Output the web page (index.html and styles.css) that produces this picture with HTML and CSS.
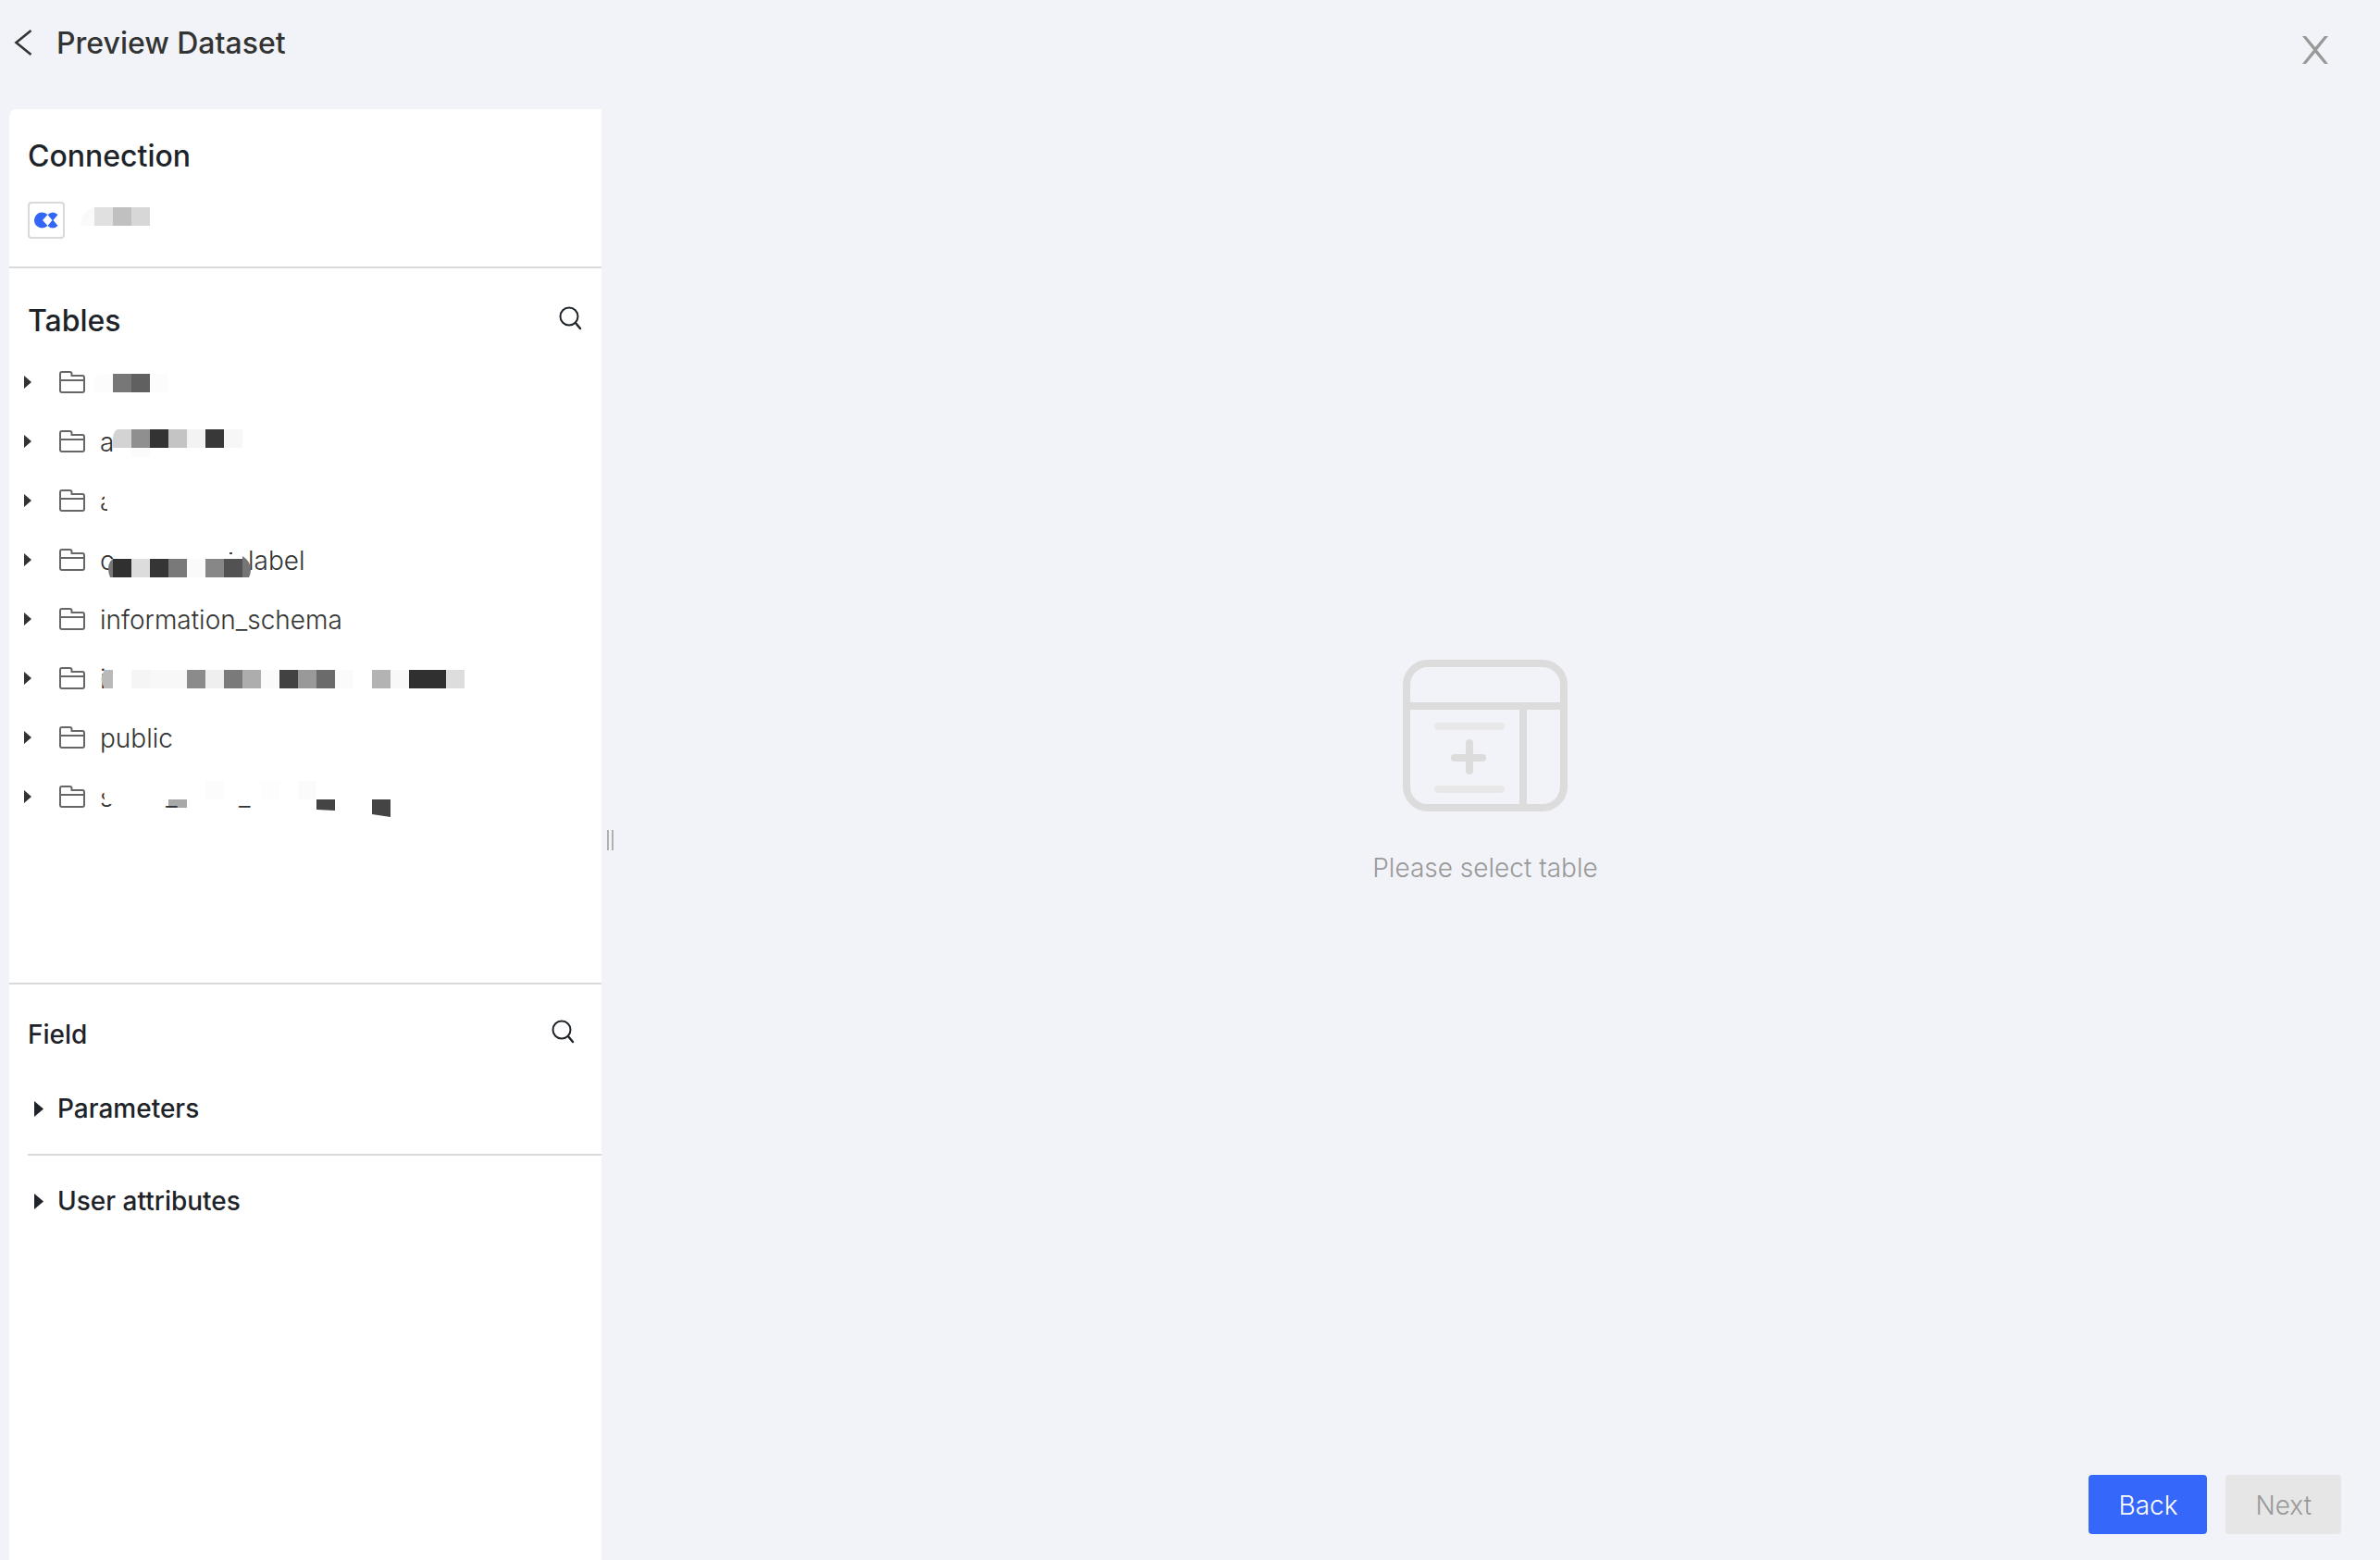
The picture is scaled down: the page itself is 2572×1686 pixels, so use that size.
FILE: index.html
```
<!DOCTYPE html>
<html lang="en">

<head>
    <meta charset="UTF-8">
    <meta name="viewport" content="width=device-width, initial-scale=1.0">
    <title>Preview Dataset</title>
    <link rel="stylesheet" href="styles.css">
</head>

<body>
    <!-- shared icons -->
    <svg class="sprite" width="0" height="0" aria-hidden="true">
        <symbol id="search" viewBox="0 0 26 26">
            <circle cx="12" cy="11" r="9.5" fill="none" stroke="currentColor" stroke-width="2" />
            <path d="M19 18l5 6" fill="none" stroke="currentColor" stroke-width="2.4" stroke-linecap="round" />
        </symbol>
        <symbol id="folder" viewBox="0 0 28 24">
            <path d="M1 21V3a2 2 0 0 1 2-2h8.500a2 2 0 0 1 2 2v2H25a2 2 0 0 1 2 2v14a2 2 0 0 1-2 2H3a2 2 0 0 1-2-2zM1 10h26" fill="none" stroke="#666" stroke-width="2" />
        </symbol>
        <symbol id="caret" viewBox="0 0 8 14">
            <path d="M0 0v14l8-7z" fill="currentColor" />
        </symbol>
    </svg>

    <header class="topbar">
        <button class="icon-button" aria-label="Go back">
            <svg width="20" height="28" viewBox="0 0 20 28"><path d="M18.500 1 2.500 14l16 13" fill="none" stroke="#333" stroke-width="2.600" /></svg>
        </button>
        <h1>Preview Dataset</h1>
        <button class="icon-button close" aria-label="Close">
            <svg width="28" height="30" viewBox="0 0 28 30"><path d="M0 0h4l10 12L24 0h4L16 15l12 15h-4L14 18 4 30H0l12-15z" fill="#999" /></svg>
        </button>
    </header>

    <main class="layout">
        <aside class="sidebar">
            <section class="connection">
                <h2>Connection</h2>
                <div class="connection-row">
                    <span class="connection-logo">
                        <svg width="26" height="18" viewBox="0 0 26 18" fill="#3366f6">
                            <path d="M14.500 3A8.500 8.500 0 1 0 14.500 15L9 9z" />
                            <path d="M14.500 3q5.500-5 11 0L20.500 9l5 6q-5.500 5-11 0L19.500 9z" />
                        </svg>
                    </span>
                    <svg width="76" height="20" viewBox="0 0 76 20" aria-hidden="true">
                        <path d="M1 20V15Q4 3 16 0v20z" fill="#fafafa" />
                        <path d="M16 0h20v20H16z" fill="#e0e0e0" />
                        <path d="M36 0h20v20H36z" fill="#c0c0c0" />
                        <path d="M56 0h20v20H56z" fill="#d7d7d7" />
                    </svg>
                </div>
            </section>

            <section class="tables">
                <div class="section-head">
                    <h2>Tables</h2>
                    <button class="icon-button" aria-label="Search tables">
                        <svg width="26" height="26"><use href="#search" /></svg>
                    </button>
                </div>
                <ul class="tree">
                    <li>
                        <button class="caret" aria-label="Expand"><svg width="8" height="14"><use href="#caret" /></svg></button>
                        <svg width="28" height="24"><use href="#folder" /></svg>
                        <span class="name">
                            <svg class="mask" width="420" height="64" aria-hidden="true">
                                <path d="M-6 43V27l4-4h16v20z" fill="#fcfcfc" />
                                <path d="M14 23h20v20H14z" fill="#777" />
                                <path d="M34 23h20v20H34z" fill="#606060" />
                                <path d="M54 23h20v20H54z" fill="#fcfcfc" />
                            </svg>
                        </span>
                    </li>
                    <li>
                        <button class="caret" aria-label="Expand"><svg width="8" height="14"><use href="#caret" /></svg></button>
                        <svg width="28" height="24"><use href="#folder" /></svg>
                        <span class="name">a
                            <svg class="mask" width="420" height="64" aria-hidden="true">
                                <path d="M14 39V28q1-7 5-9h15v20z" fill="#d3d3d3" />
                                <path d="M34 19h20v20H34z" fill="#8f8f8f" />
                                <path d="M54 19h20v20H54z" fill="#333" />
                                <path d="M74 19h20v20H74z" fill="#c4c4c4" />
                                <path d="M94 19h20v20H94z" fill="#f3f3f3" />
                                <path d="M114 19h20v20h-20z" fill="#383838" />
                                <path d="M134 19h20v20h-20z" fill="#f7f7f7" />
                                <path d="M34 39h20v10H34z" fill="#fbfbfb" />
                            </svg>
                        </span>
                    </li>
                    <li>
                        <button class="caret" aria-label="Expand"><svg width="8" height="14"><use href="#caret" /></svg></button>
                        <svg width="28" height="24"><use href="#folder" /></svg>
                        <span class="name">a
                            <svg class="mask" width="420" height="64" aria-hidden="true">
                                <path d="M5 24h15v24H8v-8l-3-4z" fill="#fff" />
                            </svg>
                        </span>
                    </li>
                    <li>
                        <button class="caret" aria-label="Expand"><svg width="8" height="14"><use href="#caret" /></svg></button>
                        <svg width="28" height="24"><use href="#folder" /></svg>
                        <span class="name"><span class="covered">c</span>label
                            <svg class="mask" width="420" height="64" aria-hidden="true">
                                <path d="M14 51h-3q-4-10 0-17l3-3z" fill="#777" />
                                <path d="M14 31h20v20H14z" fill="#303030" />
                                <path d="M34 31h20v20H34z" fill="#dcdcdc" />
                                <path d="M54 31h20v20H54z" fill="#353535" />
                                <path d="M74 31h20v20H74z" fill="#797979" />
                                <path d="M94 31h20v20H94z" fill="#fafafa" />
                                <path d="M114 31h20v20h-20z" fill="#878787" />
                                <path d="M134 31h20v20h-20z" fill="#525252" />
                                <path d="M154 28q8 5 9 13 0 7-2 10h-7z" fill="#757575" />
                                <path d="M140 24h3v2h-3z" fill="#444" />
                            </svg>
                        </span>
                    </li>
                    <li>
                        <button class="caret" aria-label="Expand"><svg width="8" height="14"><use href="#caret" /></svg></button>
                        <svg width="28" height="24"><use href="#folder" /></svg>
                        <span class="name">information_schema</span>
                    </li>
                    <li>
                        <button class="caret" aria-label="Expand"><svg width="8" height="14"><use href="#caret" /></svg></button>
                        <svg width="28" height="24"><use href="#folder" /></svg>
                        <span class="name">i
                            <svg class="mask" width="420" height="64" aria-hidden="true">
                                <path d="M14 23v20H5q-7-10 0-20z" fill="#b9b9b9" />
                                <path d="M34 23h20v20H34z" fill="#f5f5f5" />
                                <path d="M54 23h40v20H54z" fill="#f8f8f8" />
                                <path d="M94 23h20v20H94z" fill="#8b8b8b" />
                                <path d="M114 23h20v20h-20z" fill="#efefef" />
                                <path d="M134 23h20v20h-20z" fill="#7a7a7a" />
                                <path d="M154 23h20v20h-20z" fill="#adadad" />
                                <path d="M174 23h20v20h-20z" fill="#fafafa" />
                                <path d="M194 23h20v20h-20z" fill="#424242" />
                                <path d="M214 23h20v20h-20z" fill="#999" />
                                <path d="M234 23h20v20h-20z" fill="#6b6b6b" />
                                <path d="M254 23h20v20h-20z" fill="#fbfbfb" />
                                <path d="M294 23h20v20h-20z" fill="#b3b3b3" />
                                <path d="M314 23h20v20h-20z" fill="#f8f8f8" />
                                <path d="M334 23h40v20h-40z" fill="#303030" />
                                <path d="M374 23h20v20h-20z" fill="#ddd" />
                            </svg>
                        </span>
                    </li>
                    <li>
                        <button class="caret" aria-label="Expand"><svg width="8" height="14"><use href="#caret" /></svg></button>
                        <svg width="28" height="24"><use href="#folder" /></svg>
                        <span class="name">public</span>
                    </li>
                    <li>
                        <button class="caret" aria-label="Expand"><svg width="8" height="14"><use href="#caret" /></svg></button>
                        <svg width="28" height="24"><use href="#folder" /></svg>
                        <span class="name">s
                            <svg class="mask" width="420" height="64" aria-hidden="true">
                                <path d="M4 22h16v18h-9l-6-5z" fill="#fff" />
                                <path d="M114 15h20v20h-20z" fill="#fcfcfc" />
                                <path d="M174 15h20v20h-20z" fill="#fdfdfd" />
                                <path d="M214 15h20v20h-20z" fill="#fbfbfb" />
                                <path d="M74 35h20v9H74z" fill="#a8a8a8" />
                                <path d="M234 35h20v12l-20-1z" fill="#444" />
                                <path d="M294 35h20v19l-20-3z" fill="#444" />
                                <text x="71" y="42">_</text>
                                <text x="150" y="42">_</text>
                            </svg>
                        </span>
                    </li>
                </ul>
            </section>

            <section class="fields">
                <div class="section-head">
                    <h3>Field</h3>
                    <button class="icon-button" aria-label="Search fields">
                        <svg width="26" height="26"><use href="#search" /></svg>
                    </button>
                </div>
                <button class="group">
                    <svg width="10" height="17" viewBox="0 0 10 17"><path d="M0 0v17l10-8.500z" fill="currentColor" /></svg>
                    Parameters
                </button>
                <button class="group">
                    <svg width="10" height="17" viewBox="0 0 10 17"><path d="M0 0v17l10-8.500z" fill="currentColor" /></svg>
                    User attributes
                </button>
            </section>
        </aside>

        <div class="resizer"><span></span><span></span></div>

        <section class="content">
            <div class="empty">
                <svg width="178" height="164" viewBox="0 0 178 164" fill="none" stroke="#dcdcdc" stroke-width="8">
                    <rect x="4" y="4" width="170" height="156" rx="23" />
                    <path d="M4 50h170M130 50v110" />
                    <path d="M56 106h30M72 90v30" stroke-linecap="round" />
                    <path d="M38 72h68M38 140h68" stroke="#e8e8e8" stroke-linecap="round" />
                </svg>
                <p>Please select table</p>
            </div>
            <footer class="actions">
                <button class="button primary">Back</button>
                <button class="button" disabled>Next</button>
            </footer>
        </section>
    </main>
</body>

</html>
```
FILE: styles.css
```
* {
    box-sizing: border-box;
}

body {
    display: flex;
    flex-direction: column;
    min-height: 100vh;
    margin: 0;
    font-family: Inter, sans-serif;
    font-size: 28px;
    font-weight: 350;
    line-height: 42px;
    color: #333;
    background-color: #f1f3f8;
}

h1,
h2,
h3,
p,
ul {
    margin: 0;
    padding: 0;
}

h1,
h2 {
    font-size: 32px;
    font-weight: 500;
}

h3 {
    font-size: 28px;
    font-weight: 500;
}

h2,
h3 {
    color: #1d2329;
}

button {
    font: inherit;
    color: inherit;
    background: none;
    border: none;
    padding: 0;
    cursor: pointer;
}

svg {
    display: block;
    flex-shrink: 0;
}

.sprite {
    position: absolute;
}

.icon-button {
    display: flex;
    align-items: center;
    height: 36px;
    color: #1d2329;
}

/* top bar */
.topbar {
    display: flex;
    align-items: flex-start;
    gap: 26px;
    height: 118px;
    padding: 28px 56px 49px 15px;
}

.topbar h1 {
    flex: 1;
    line-height: 38px;
}

.topbar .close {
    align-self: flex-end;
    height: 30px;
}

.layout {
    display: flex;
    flex: 1;
    padding: 0 30px 0 10px;
}

/* sidebar */
.sidebar {
    display: flex;
    flex-direction: column;
    width: 640px;
    background-color: #fff;
    border-top-left-radius: 8px;
}

.connection {
    padding: 30px 20px;
    border-bottom: 2px solid #d9d9d9;
}

.connection-row {
    display: flex;
    gap: 16px;
    margin-top: 28px;
}

.connection-row > svg {
    margin-top: 6px;
}

.connection-logo {
    display: flex;
    align-items: center;
    justify-content: center;
    width: 40px;
    height: 40px;
    border: 2px solid #d9d9d9;
    border-radius: 4px;
}

.section-head {
    display: flex;
    justify-content: space-between;
}

.tables {
    flex: 1;
    padding: 36px 21px 0 20px;
    border-bottom: 2px solid #d9d9d9;
}

.tree {
    margin-top: 13px;
    list-style: none;
}

.tree li {
    display: flex;
    align-items: center;
    height: 64px;
}

.caret {
    margin: 0 30px 0 -4px;
}

.name {
    position: relative;
    height: 64px;
    margin-left: 16px;
    line-height: 66px;
}

.covered {
    display: inline-block;
    width: 160px;
}

/* blocks drawn over hidden names */
.mask {
    position: absolute;
    top: 0;
    left: 0;
    overflow: visible;
}

.mask text {
    fill: #333;
}

.fields {
    flex: 0 0 622px;
    padding: 33px 0 0 20px;
}

.fields .section-head {
    margin-bottom: 10px;
    padding-right: 29px;
}

.group {
    display: flex;
    align-items: center;
    gap: 15px;
    width: 100%;
    padding: 28px 7px;
    font-weight: 500;
    color: #1d2329;
}

.group + .group {
    border-top: 2px solid #d9d9d9;
}

/* drag handle between the panes */
.resizer {
    display: flex;
    align-items: center;
    justify-content: center;
    gap: 3px;
    width: 18px;
    padding-top: 12px;
    cursor: col-resize;
}

.resizer span {
    width: 2px;
    height: 22px;
    background-color: #b0b0b0;
}

/* main area */
.content {
    display: flex;
    flex: 1;
    flex-direction: column;
}

.empty {
    display: flex;
    flex: 1;
    flex-direction: column;
    align-items: center;
    justify-content: center;
    gap: 40px;
    color: #999;
}

.actions {
    display: flex;
    justify-content: flex-end;
    gap: 20px;
    padding: 40px 12px 28px;
}

.button {
    height: 64px;
    padding: 2px 32px 0;
    color: #999;
    background-color: #e6e6e6;
    border-radius: 4px;
}

.button.primary {
    color: #fff;
    background-color: #3568fa;
}
```
